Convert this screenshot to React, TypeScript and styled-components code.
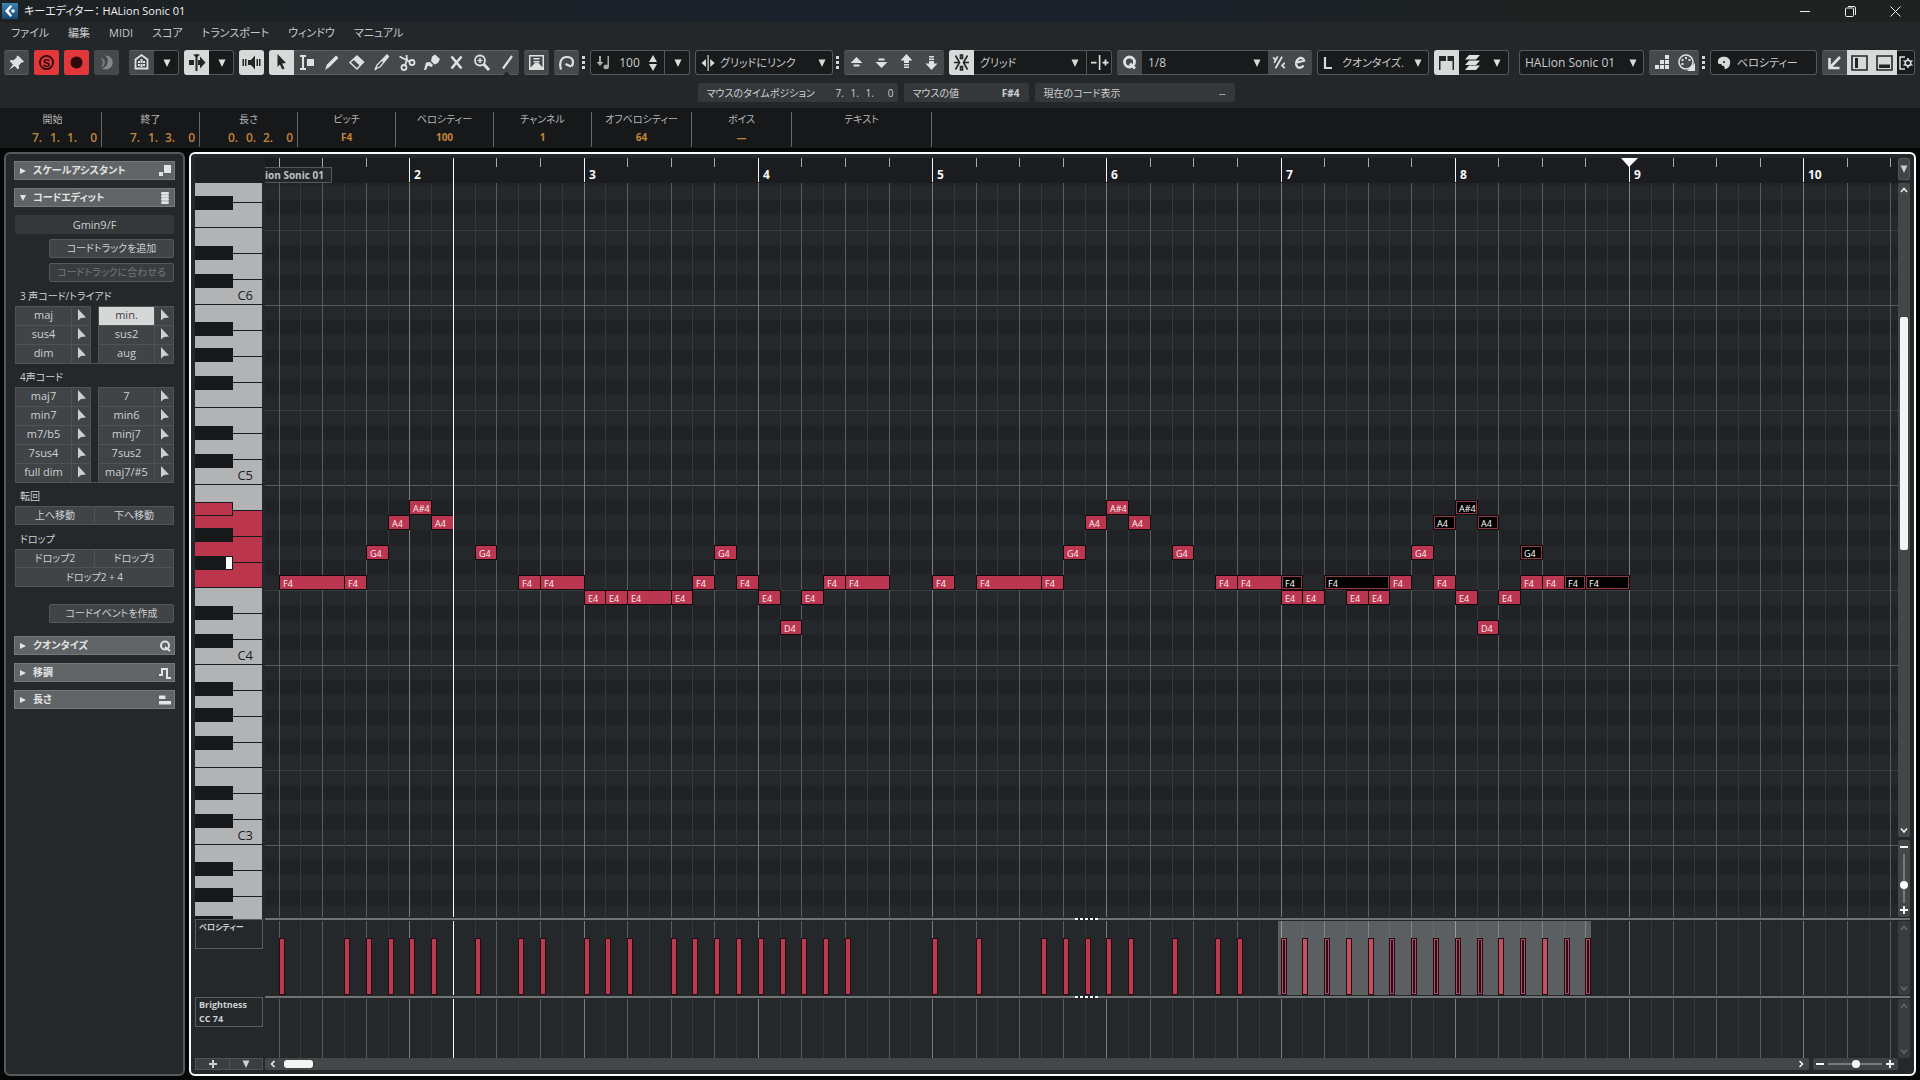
import React from "react";
import styled, { createGlobalStyle, css } from "styled-components";

const GlobalStyle = createGlobalStyle`
  *, *::before, *::after { box-sizing: border-box; }
  html, body { margin: 0; padding: 0; background: #050606; }
  body, button, input, select {
    font-family: "Open Sans", "Noto Sans CJK JP", sans-serif;
    font-size: 11px;
    font-feature-settings: "palt";
    color: #cdd0d1;
  }
  button, input, select { margin: 0; padding: 0; border: 0; background: none; border-radius: 0; }
  button { cursor: pointer; }
`;

/* ---------- timing and pitch geometry ---------- */

const EIGHTH = 21.78;
const ORIGIN = -29.9;
const xAt = (n: number) => Math.round(ORIGIN + EIGHTH * n);

const ROW = 15;
const OCTAVE = 180;
const SCROLL = 58;
const pitchRow: Record<string, number> = { "A#4": 1, A4: 2, G4: 4, F4: 6, E4: 7, D4: 9 };
const yAt = (pitch: string) => 2 * OCTAVE - SCROLL + pitchRow[pitch] * ROW;

type Note = [start: number, length: number, pitch: string, selected?: boolean];
const notes: Note[] = [
  [2, 3, "F4"], [5, 1, "F4"], [6, 1, "G4"], [7, 1, "A4"], [8, 1, "A#4"], [9, 1, "A4"], [11, 1, "G4"],
  [13, 1, "F4"], [14, 2, "F4"], [16, 1, "E4"], [17, 1, "E4"], [18, 2, "E4"], [20, 1, "E4"],
  [21, 1, "F4"], [22, 1, "G4"], [23, 1, "F4"], [24, 1, "E4"], [25, 1, "D4"], [26, 1, "E4"],
  [27, 1, "F4"], [28, 2, "F4"],
  [32, 1, "F4"], [34, 3, "F4"], [37, 1, "F4"], [38, 1, "G4"], [39, 1, "A4"], [40, 1, "A#4"], [41, 1, "A4"],
  [43, 1, "G4"], [45, 1, "F4"], [46, 2, "F4"],
  [48, 1, "E4"], [49, 1, "E4"], [48, 1, "F4", true], [50, 3, "F4", true], [51, 1, "E4"], [52, 1, "E4"],
  [53, 1, "F4"], [54, 1, "G4"], [55, 1, "A4", true], [55, 1, "F4"], [56, 1, "A#4", true], [56, 1, "E4"],
  [57, 1, "A4", true], [57, 1, "D4"], [58, 1, "E4"], [59, 1, "G4", true], [59, 1, "F4"], [60, 1, "F4"],
  [61, 1, "F4", true], [62, 2, "F4", true],
];
const velocityStarts = Array.from(new Set(notes.map((n) => n[0]))).sort((a, b) => a - b);
const hollowBars = new Set([48, 50, 53, 54, 55, 56, 57, 59, 61, 62]);
const gridSteps = Array.from({ length: 75 }, (_, i) => i + 2);

/* ---------- icons ---------- */

const Svg = styled.svg<{ $w?: number; $h?: number }>`
  display: block;
  flex: none;
  width: ${(p) => p.$w ?? 25}px;
  height: ${(p) => p.$h ?? 25}px;
  fill: currentColor;
  pointer-events: none;
`;

type IconProps = { children: React.ReactNode; w?: number; h?: number; box?: string };
const Icon = ({ children, w, h, box }: IconProps) => (
  <Svg $w={w} $h={h} viewBox={box ?? "0 0 25 25"} aria-hidden="true">{children}</Svg>
);
const line = { fill: "none", stroke: "currentColor" } as const;

const Down = () => <Icon w={8} h={8} box="0 0 8 8"><path d="M.5.5h7L4 8z" /></Icon>;
const Pin = () => <Icon><path d="M14 5.500l6 6-1.200 1-1-.300-3 3.300.200 3-1.200.800-3.200-3.200-5.600 4 4-5.600-3.200-3.200.800-1.200 3 .200 3.300-3-.300-1z" /></Icon>;
const Solo = () => <Icon><circle cx="12.500" cy="12.500" r="6.600" {...line} strokeWidth="1.800" /><text x="12.500" y="16.500" textAnchor="middle" fontFamily="Liberation Sans" fontSize="11" fontWeight="700">S</text></Icon>;
const Rec = () => <Icon><circle cx="12.500" cy="12.500" r="6" /></Icon>;
const Moon = () => <Icon><path d="M11 5.500a7 7 0 1 1-3.500 12.500A6 6 0 0 0 13.500 12.500a6 6 0 0 0-2.500-7z" /><path d="M6.500 8a4.500 4.500 0 0 1 0 9c3-2 3-7 0-9z" opacity=".8" /></Icon>;
const House = () => <Icon><path d="M6.500 18.500v-9l6-4.500 6 4.500v9z" {...line} strokeWidth="1.800" /><path d="M9 11h2v2H9zm2.500-2h2v4h-2zM14 11h2v2h-2zm-5 3h2v2H9zm2.500 0h2v3h-2zm2.500 0h2v2h-2z" /></Icon>;
const AutoScroll = () => <Icon><path d="M11.500 4h2v17h-2zM5 10h5v5H5zm9 0h2V6.500l5.500 6-5.500 6V15h-2zM9 4.500h7L12.500 8z" /></Icon>;
const Speaker = () => <Icon><path d="M3.500 9H5v7H3.500zM6 9h1.500v7H6zm3 1h3l4-4.500v14L12 15H9zM17.500 9H19v7h-1.500zM20 9h1.500v7H20z" /></Icon>;
const Cursor = () => <Icon><path d="M8.500 4l8.500 9-3.800.600 2.300 5-2.300 1-2.300-5L8.500 17z" /></Icon>;
const RangeTool = () => <Icon><path d="M6 5h6v2h-2v11h2v2H6v-2h2V7H6zM13 9h7v7h-7z" /></Icon>;
const Pencil = () => <Icon><path d="M17 5.500l2.500 2.500-9 9-4.500 3 2-5.500z" /></Icon>;
const Eraser = () => <Icon><path d="M13 6l6.500 6-6.500 7-7-6.500z" {...line} strokeWidth="1.500" /><path d="M13 6l6.500 6-3.500 3.800-6.500-6z" /></Icon>;
const Knife = () => <Icon><path d="M6 20l2-5L18 5l1.500 1.500-8.500 10.500-3 1z" {...line} strokeWidth="1.300" /><path d="M12.500 11l5.500-6 1.500 1.500-5 6z" /></Icon>;
const Scissors = () => <Icon><g {...line} strokeWidth="1.800"><path d="M5.500 6.500l10 5M12.500 5l.5 5-2 5" /><circle cx="18" cy="12.500" r="2.500" /><circle cx="10" cy="17.500" r="2.500" /></g></Icon>;
const Glue = () => <Icon><path d="M13 6.500l3-2 5 4.500-2 4-3.500 1.500-3.500-3.500zM7 12.500l4-.5 3 3-1.500 2-3.500-1.500L7 20H5z" /></Icon>;
const Cross = () => <Icon><path d="M7.500 6.500l10 12m0-12l-10 12" {...line} strokeWidth="2.600" /></Icon>;
const Zoom = () => <Icon><g {...line}><circle cx="11" cy="10.500" r="5" strokeWidth="1.800" /><path d="M14.500 14l5.500 6" strokeWidth="3" /><path d="M8.500 10.500h5M11 8v5" strokeWidth="1.500" /></g></Icon>;
const LineTool = () => <Icon><path d="M18 6l-9 12.500" {...line} strokeWidth="2.200" /><path d="M9 25l3.500-3.500L16 25z" fill="#24272a" /></Icon>;
const Feedback = () => <Icon><path d="M5 5h4.500v1.500h-3V19H5zM15.500 5H20v14h-1.500V6.500h-3zM9.500 5h7v1.500h-7zm0 3h6v1.500h-6zm0 3h6v1.500h-6zM5 20v-1l6-6h3.500l5.500 6v1z" /></Icon>;
const Loop = () => <Icon><path d="M7 19.500c-2-7 0-12.500 6-12.500s7.500 5 4.500 9.500M11.500 14l5.500 2.500" {...line} strokeWidth="2.200" /></Icon>;
const NoteIn = () => <Icon w={14} h={16} box="0 0 14 16"><path d="M3 1h2v6h2.500L4 11 .500 7H3zM11.500 1h1.500v11a2.800 2.300 0 1 1-1.500-2z" opacity=".75" /></Icon>;
const Spin = () => <Icon w={8} h={16} box="0 0 8 16"><path d="M4 0l4 7H0zM4 16l4-7H0z" /></Icon>;
const GridLink = () => <Icon w={14} h={16} box="0 0 14 16"><path d="M6.500 0h1.200v16H6.500zM5 4v8L.500 8zm4.200 0v8l4.500-4z" /></Icon>;
const UpStep = () => <Icon><path d="M12.500 7l6 6h-12zM9.500 14.500h6v2h-6z" /></Icon>;
const DownStep = () => <Icon><path d="M12.500 18l6-6h-12zM9.500 8.500h6v2h-6z" /></Icon>;
const UpOct = () => <Icon><path d="M12.500 4l6 6.500h-3.500V13h-5v-2.500H6.500zM10 14h5v1.500h-5zm0 2.500h5V18h-5z" /></Icon>;
const DownOct = () => <Icon><path d="M12.500 20l6-6.500h-3.500V11h-5v2.500H6.500zM10 8.500h5V10h-5zM10 6h5v1.500h-5z" /></Icon>;
const Snap = () => <Icon><path d="M11.500 5h2v3.500h-2zm0 11.500h2V20h-2zM6.500 5.500l4 7-4 7M18.500 5.500l-4 7 4 7M5 12.500h5M15 12.500h5" stroke="currentColor" strokeWidth="1.600" fill="none" /></Icon>;
const SnapType = () => <Icon><path d="M11.800 5h1.600v15h-1.600zM4 11.700h5.500v1.800H4zM15.500 11.700h6v1.800h-6zm2.100-2.100h1.800v6h-1.800z" /></Icon>;
const QMark = () => <Icon><circle cx="12.500" cy="12" r="5" {...line} strokeWidth="2.800" /><path d="M13 13.500l5 5" {...line} strokeWidth="2.800" /></Icon>;
const Iter = () => <Icon w={22}><g {...line} strokeWidth="2"><path d="M6 6.500l3 4M11 5.500L7 13M16 6L8.500 19M19 13l-3 3 3 3" /></g></Icon>;
const EMark = () => <Icon w={22}><path d="M6 13L16 10.500c-.5-3.500-4-4-6.500-2s-3.500 6-1.500 8.500 5 1.500 7.500-1" {...line} strokeWidth="2.600" /></Icon>;
const LMark = () => <Icon w={14} h={14} box="0 0 14 14"><path d="M2 1v11h7" {...line} strokeWidth="2.200" /></Icon>;
const Staff = () => <Icon><path d="M5 6h7v5H6.500v9H5zm8.500 0H20v14h-1.500v-9h-5z" /></Icon>;
const Layers = () => <Icon><path d="M10 5h11l-4 4.500H6zM10 10.500h11L17 15H6zM10 15.500h11L17 20H6z" /></Icon>;
const StepIn = () => <Icon><path d="M16 5h4v4h-4zM16 10h4v4h-4zM16 15h4v4h-4zM11 10h4v4h-4zM11 15h4v4h-4zM6 15h4v4H6z" /></Icon>;
const MidiIn = () => <Icon><circle cx="12" cy="12" r="7" {...line} strokeWidth="1.600" /><path d="M11 7h2v2h-2zM7.500 9h2v2h-2zm7 0h2v2h-2zM7.500 13h2v2h-2zM21 13v8h-8z" /></Icon>;
const Palette = () => <Icon w={16} h={18} box="0 0 18 18"><path d="M9 2c4 0 7 2.500 7 6 0 5-3 8-6 8l-1-4-2 .5L6 10H3L2 8c0-4 3-6 7-6zm-1 5h2v2H8z" fillRule="evenodd" /></Icon>;
const CornerArrow = () => <Icon><path d="M7.500 8v10h10M8 17.500L18 7" {...line} strokeWidth="2.600" /></Icon>;
const LeftZone = () => <Icon><path d="M5 6h15v14H5z" {...line} strokeWidth="1.600" /><path d="M8 8h3v10H8z" /></Icon>;
const LowZone = () => <Icon><path d="M5 6h15v14H5z" {...line} strokeWidth="1.600" /><path d="M7 14.500h11V18H7z" /></Icon>;
const Setup = () => <Icon w={16} h={16} box="0 0 16 16"><g {...line} strokeWidth="1.500"><path d="M7 2H2v12h5" /><circle cx="10" cy="8" r="2.800" /><path d="M10 3v2m0 6v2M5.500 5.500l1.500 1m6 3l1.500 1m-9 0l1.500-1m6-3l1.500-1" /></g></Icon>;
const Play = () => <Icon w={8} h={8} box="0 0 8 8"><path d="M1 1L7 4 1 7z" /></Icon>;
const PlayDown = () => <Icon w={8} h={8} box="0 0 8 8"><path d="M1 1h6L4 7z" /></Icon>;
const ApplyArrow = () => <Icon w={9} h={12} box="0 0 9 12"><path d="M1 0v11.500l3-2.500 5-.5z" /></Icon>;
const ScaleIcon = () => <Icon w={12} h={12} box="0 0 12 12"><path d="M5 0h7v8H5zM0 7h4v4H0z" /></Icon>;
const ChordIcon = () => <Icon w={12} h={12} box="0 0 12 12"><rect x="2" y="0" width="8" height="2.700" rx="1.300" /><rect x="2" y="3.100" width="8" height="2.600" rx="1.300" /><rect x="2" y="6.100" width="8" height="2.600" rx="1.300" /><rect x="2" y="9.200" width="8" height="2.700" rx="1.300" /></Icon>;
const QuantIcon = () => <Icon w={12} h={12} box="0 0 12 12"><circle cx="6" cy="5.500" r="4" {...line} strokeWidth="2" /><path d="M6 7l5 4" {...line} strokeWidth="1.800" /></Icon>;
const TransIcon = () => <Icon w={12} h={12} box="0 0 12 12"><path d="M0 8h3V2h5v9h4" {...line} strokeWidth="2" /></Icon>;
const LengthIcon = () => <Icon w={12} h={12} box="0 0 13 12"><path d="M0 1h7v4H0zM0 7h13v4H0z" /></Icon>;
const Chevron = ({ dir }: { dir: "up" | "down" | "left" | "right" }) => {
  const d = { up: "M1 6l3-3.500L7 6", down: "M1 2.500L4 6l3-3.500", left: "M5.500 1L2.500 4l3 3", right: "M2.500 1l3 3-3 3" }[dir];
  return <Icon w={8} h={8} box="0 0 8 8"><path d={d} {...line} strokeWidth="1.500" /></Icon>;
};
const Plus = () => <Icon w={8} h={8} box="0 0 8 8"><path d="M3 0h2v3h3v2H5v3H3V5H0V3h3z" /></Icon>;
const Minus = () => <Icon w={8} h={8} box="0 0 8 8"><path d="M0 3h8v2H0z" /></Icon>;

/* ---------- window frame ---------- */

const Window = styled.div`
  display: flex;
  flex-direction: column;
  min-width: 1600px;
  height: 100vh;
  min-height: 900px;
  overflow: hidden;
  background: #050606;
`;

const TitleBar = styled.header`
  display: flex;
  align-items: center;
  gap: 6px;
  height: 22px;
  padding: 0 2px;
  background: linear-gradient(90deg, #1d2122, #1b222b 40%, #1b222b 60%, #1e2221 80%);
  color: #eef0f0;
`;
const Title = styled.h1`
  flex: 1;
  margin: 0;
  font-size: 11px;
  font-weight: 400;
  line-height: 22px;
`;
const Logo = styled.span`
  display: block;
  background: linear-gradient(#3a86b5, #174a72);
`;
const WindowButtons = styled.div`
  display: flex;
`;
const WindowButton = styled.button`
  display: grid;
  place-items: center;
  width: 45px;
  height: 20px;
  color: #eef0f0;
`;

const MenuBar = styled.nav`
  display: flex;
  align-items: center;
  gap: 19px;
  height: 22px;
  padding: 0 11px;
  background: #24272a;
`;
const MenuItem = styled.button`
  line-height: 20px;
  color: #c5c8ca;
`;

/* ---------- toolbar ---------- */

const Toolbar = styled.div`
  display: flex;
  align-items: center;
  gap: 5px;
  height: 37px;
  padding: 0 5px 0 4px;
  background: #24272a;
`;
const Group = styled.div<{ $grow?: boolean; $wide?: boolean; $w?: number }>`
  display: flex;
  flex: ${(p) => (p.$grow ? "1 1 0" : "none")};
  width: ${(p) => (p.$w ? p.$w + "px" : "auto")};
  min-width: 0;
  height: 25px;
  margin-right: ${(p) => (p.$wide ? 5 : 0)}px;
  border-radius: 3px;
  overflow: hidden;
  background: #181a1c;
  box-shadow: inset 0 0 0 1px #55585b;
`;
type Tone = "plain" | "on" | "red" | "dark" | "dim";
const tones: Record<Tone, ReturnType<typeof css>> = {
  plain: css`background: #46484b; color: #dfe1e1; box-shadow: inset 0 1px #5b5d60, inset 0 -1px #5b5d60;`,
  on: css`background: #d8dada; color: #232527;`,
  red: css`background: #e2383b; color: #2b0b0c;`,
  dark: css`background: transparent; color: #dfe1e1;`,
  dim: css`background: #46484b; color: #85878a;`,
};
const Tool = styled.button<{ $tone?: Tone; $w?: number }>`
  display: flex;
  flex: none;
  align-items: center;
  justify-content: center;
  width: ${(p) => p.$w ?? 25}px;
  height: 25px;
  overflow: hidden;
  ${(p) => tones[p.$tone ?? "plain"]}
`;
const Dots = styled.span`
  flex: none;
  width: 3px;
  height: 13px;
  margin-left: -2px;
  background: repeating-linear-gradient(#d5d7d7 0 3px, transparent 3px 5px);
`;
const Field = styled.label`
  display: flex;
  flex: 1;
  align-items: center;
  gap: 5px;
  min-width: 0;
  height: 25px;
  padding: 0 7px 0 6px;
  color: #d8dada;
`;
const Select = styled.select<{ $latin?: boolean }>`
  flex: 1;
  min-width: 0;
  height: 23px;
  appearance: none;
  outline: 0;
  color: #c9cccd;
  font-size: ${(p) => (p.$latin ? 12 : 11)}px;
  text-overflow: clip;
`;
const NumberInput = styled.input`
  flex: 1;
  min-width: 0;
  width: 30px;
  text-align: center;
  font-size: 12px;
  color: #c9cccd;
  outline: 0;
`;
const Split = styled.span`
  flex: none;
  width: 1px;
  height: 25px;
  background: #55585b;
`;

const Dropdown = ({ label, value, icon, latin }: { label: string; value: string; icon?: React.ReactNode; latin?: boolean }) => (
  <Field>
    {icon}
    <Select $latin={latin} aria-label={label} defaultValue={value}><option>{value}</option></Select>
    <Down />
  </Field>
);

const Status = styled.div`
  display: flex;
  justify-content: center;
  gap: 6px;
  height: 27px;
  padding: 2px 0 6px 12px;
  background: #24272a;
`;
const StatusBox = styled.div<{ $w: number; $tight?: boolean }>`
  display: flex;
  align-items: center;
  justify-content: space-between;
  width: ${(p) => p.$w}px;
  height: 19px;
  padding: 0 ${(p) => (p.$tight ? 4 : 9)}px 0 9px;
  border-radius: 2px;
  background: #35383b;
  font-size: 10px;
`;

const TimeText = styled.span<{ $large?: boolean }>`
  display: grid;
  grid-template-columns: ${(p) => (p.$large ? "18px 17px 17px 13px" : "15px 15px 15px 13px")};
  font-size: ${(p) => (p.$large ? 12 : 10)}px;
  font-weight: ${(p) => (p.$large ? 600 : 400)};
  & > :last-child { text-align: right; }
`;
const Time = ({ parts, large }: { parts: string[]; large?: boolean }) => (
  <TimeText $large={large}>{parts.map((p, i) => <span key={i}>{p}</span>)}</TimeText>
);

/* ---------- info line ---------- */

const InfoLine = styled.dl`
  display: flex;
  height: 40px;
  margin: 0 0 4px;
  padding: 4px 0 1px 4px;
  background: #16181a;
`;
const InfoCell = styled.div<{ $w?: number }>`
  display: flex;
  flex-direction: column;
  align-items: center;
  width: ${(p) => p.$w ?? 98}px;
  border-right: 1px solid #66696b;
`;
const InfoName = styled.dt`
  font-size: 10px;
  line-height: 15px;
  color: #b4b7b8;
`;
const InfoValue = styled.dd<{ $time?: boolean }>`
  align-self: ${(p) => (p.$time ? "flex-end" : "center")};
  margin: 0;
  padding: ${(p) => (p.$time ? "0 4px 0 0" : "0")};
  font-size: 10px;
  font-weight: 700;
  line-height: 21px;
  color: #c4843a;
`;

/* ---------- inspector ---------- */

const Main = styled.main`
  display: flex;
  flex: 1;
  gap: 4px;
  min-height: 0;
  padding: 0 4px 4px;
`;
const Inspector = styled.aside`
  flex: none;
  width: 181px;
  padding: 7px 8px;
  border: 2px solid #58595c;
  border-radius: 6px;
  background: #24282b;
`;
const Section = styled.button`
  display: flex;
  align-items: center;
  gap: 6px;
  width: 100%;
  height: 19px;
  margin-bottom: 8px;
  padding: 0 3px 0 4px;
  border: 1px solid #76797b;
  background: #616466;
  color: #e2e4e4;
  font-size: 10px;
  font-weight: 600;
  line-height: 17px;
  text-align: left;
  & > span { flex: 1; }
`;
const Body = styled.div`
  padding: 0 1px;
  margin-bottom: 13px;
`;
const ChordName = styled.output`
  display: block;
  height: 19px;
  border-radius: 2px;
  background: #35383b;
  line-height: 19px;
  text-align: center;
`;
const Wide = styled.button<{ $top?: number }>`
  display: block;
  width: 125px;
  height: 19px;
  margin: ${(p) => p.$top ?? 5}px 0 0 auto;
  border: 1px solid #55585a;
  border-radius: 2px;
  background: #414447;
  font-size: 10px;
  line-height: 17px;
  &:disabled { color: #747779; background: #393c3f; }
`;
const Caption = styled.h2`
  height: 24px;
  margin: 0;
  padding: 5px 5px 0;
  font-size: 10px;
  font-weight: 400;
  line-height: 18px;
`;
const ChordGrid = styled.div`
  display: grid;
  grid-template-columns: 1fr 1fr;
  column-gap: 7px;
  border-bottom: 1px solid #505356;
  margin-bottom: -1px;
`;
const ChordCell = styled.div`
  display: grid;
  grid-template-columns: 1fr 19px;
  height: 19px;
  border-right: 1px solid #505356;
`;
const ChordButton = styled.button<{ $on?: boolean }>`
  display: grid;
  place-items: center;
  height: 19px;
  padding-bottom: 2px;
  border: solid #505356;
  border-width: 1px 0 0 1px;
  line-height: 16px;
  background: ${(p) => (p.$on ? "#d6d8d7" : "#414447")};
  color: ${(p) => (p.$on ? "#3a3c3e" : "#cdd0d1")};
`;
const PairGrid = styled.div`
  display: grid;
  grid-template-columns: 1fr 1fr;
  border: solid #505356;
  border-width: 1px 0 0 1px;
`;
const PairButton = styled.button<{ $full?: boolean }>`
  grid-column: ${(p) => (p.$full ? "1 / -1" : "auto")};
  height: ${(p) => (p.$full ? 19 : 18)}px;
  border: solid #505356;
  border-width: 0 1px 1px 0;
  background: #414447;
  font-size: 10px;
  line-height: 17px;
`;

const Chords = ({ names, active }: { names: string[]; active?: string }) => (
  <ChordGrid>
    {names.map((n) => (
      <ChordCell key={n}>
        <ChordButton $on={n === active}>{n}</ChordButton>
        <ChordButton aria-label={n}><ApplyArrow /></ChordButton>
      </ChordCell>
    ))}
  </ChordGrid>
);

/* ---------- key editor ---------- */

const Editor = styled.section`
  display: grid;
  flex: 1;
  grid-template-columns: 70px minmax(0, 1fr) 12px;
  grid-template-rows: 25px minmax(0, 1fr) 4px 74px 4px 59px 12px;
  min-width: 0;
  padding: 4px;
  border: 2px solid #fafbfb;
  border-radius: 6px;
  background: #24282b;
`;
const Lane = styled.div`
  position: relative;
  overflow: hidden;
`;
const RulerLane = styled(Lane)`
  background: #1b1c1f;
`;
const RulerCorner = styled.span`
  background: #1e2023;
`;
const RollLane = styled(Lane)`
  background-color: #24282b;
  background-image: linear-gradient(
    #55595b 0 1px, #24282b 1px 15px, #202225 15px 30px, #24282b 30px 45px, #202225 45px 60px,
    #24282b 60px 75px, #202225 75px 90px, #24282b 90px 105px, #3a3e40 105px 106px,
    #24282b 106px 120px, #202225 120px 135px, #24282b 135px 150px, #202225 150px 165px, #24282b 165px 180px
  );
  background-size: 100% 180px;
  background-position: 0 -58px;
`;
const GridLine = styled.i<{ $kind: "bar" | "beat" | "half" }>`
  position: absolute;
  top: 0;
  bottom: 0;
  width: 1px;
  background: ${(p) => ({ bar: "#7a7d7e", beat: "#5a5d5f", half: "#34383a" })[p.$kind]};
`;
const Tick = styled.i<{ $bar: boolean }>`
  position: absolute;
  top: 0;
  width: 1px;
  height: ${(p) => (p.$bar ? 24 : 9)}px;
  background: ${(p) => (p.$bar ? "#f4f5f5" : "#a5a7a8")};
`;
const BarNumber = styled.span`
  position: absolute;
  top: 8px;
  font-size: 12px;
  font-weight: 700;
  line-height: 18px;
  color: #f4f5f5;
`;
const PartLabel = styled.span`
  position: absolute;
  top: 9px;
  left: 0;
  width: 67px;
  height: 16px;
  border: 1px solid #55585a;
  border-left: 0;
  background: #24272a;
  font-size: 10px;
  font-weight: 700;
  line-height: 14px;
  white-space: nowrap;
  color: #bfc2c3;
`;
const Playhead = styled.i`
  position: absolute;
  top: 0;
  bottom: 0;
  width: 1px;
  background: #fff;
`;
const Locator = styled.i`
  position: absolute;
  top: 0;
  margin-left: -8px;
  border: solid transparent;
  border-width: 9px 9px 0 8px;
  border-top-color: #fff;
`;
const NoteBox = styled.button<{ $selected?: boolean }>`
  position: absolute;
  height: 15px;
  padding: 1px 0 0 3px;
  overflow: hidden;
  border: 1px solid #16080b;
  background: ${(p) => (p.$selected ? "#000" : "#bb3650")};
  box-shadow: ${(p) => (p.$selected ? "inset 0 0 0 1px #8e3c48" : "none")};
  color: ${(p) => (p.$selected ? "#fff" : "#fdf0f1")};
  font-size: 9px;
  line-height: 13px;
  text-align: left;
`;
const VelBar = styled.i<{ $hollow: boolean; $shaded: boolean }>`
  position: absolute;
  top: 17px;
  bottom: 0;
  width: 6px;
  border: 1px solid #2a090f;
  background: ${(p) => (p.$hollow ? "#3a0715" : p.$shaded ? "#bb5465" : "#b83b51")};
  box-shadow: ${(p) => (p.$hollow ? "inset 0 0 0 1px #a0566a" : "none")};
`;
const SelectionShade = styled.i`
  position: absolute;
  top: 0;
  bottom: 0;
  background: rgba(220, 225, 222, 0.3);
`;
const Divider = styled.div`
  position: relative;
  grid-column: 2 / 4;
  height: 2px;
  margin-top: 1px;
  background: #707374;
`;
const Grip = styled.i`
  position: absolute;
  top: 0;
  left: 49%;
  width: 23px;
  height: 2px;
  margin-left: 4px;
  background: repeating-linear-gradient(90deg, #f4f5f5 0 3px, #24282b 3px 5px);
`;

/* keyboard */

const Keyboard = styled.div`
  width: 67px;
  margin-bottom: -2px;
  overflow: hidden;
`;
const KeyStack = styled.div`
  margin-top: -58px;
`;
const OctaveBox = styled.div`
  position: relative;
  height: 180px;
`;
const WhiteKey = styled.button<{ $h: number; $lit: boolean }>`
  display: block;
  width: 67px;
  height: ${(p) => p.$h}px;
  padding: 6px 9px 0 0;
  border-bottom: 1px solid #1a1b1c;
  background: ${(p) => (p.$lit ? "#bb364d" : "#b1b3b5")};
  color: #1d1e1f;
  font-size: 13px;
  line-height: 16px;
  text-align: right;
`;
const BlackKey = styled.button<{ $lit: boolean }>`
  position: absolute;
  left: 0;
  width: 38px;
  height: 14px;
  border: ${(p) => (p.$lit ? "1px solid #1a1b1c" : "0")};
  border-left: 0;
  background: ${(p) => (p.$lit ? "#bb364d" : "#17181a")};
`;
const HoverMark = styled.i`
  position: absolute;
  top: 1px;
  right: 1px;
  width: 6px;
  height: 12px;
  background: #fff;
`;

const whites: [string, number][] = [["B", 26], ["A", 26], ["G", 26], ["F", 25], ["E", 26], ["D", 26], ["C", 25]];
const blacks: [string, number][] = [["A#", 17], ["G#", 43], ["F#", 71], ["D#", 121], ["C#", 149]];
const lit = new Set(["A4", "G4", "F4", "A#4"]);

const Piano = () => (
  <Keyboard>
    <KeyStack>
      {[6, 5, 4, 3, 2].map((o) => (
        <OctaveBox key={o}>
          {whites.map(([n, h]) => (
            <WhiteKey key={n} $h={h} $lit={lit.has(n + o)} aria-label={n + o}>{n === "C" && o > 2 ? n + o : ""}</WhiteKey>
          ))}
          {blacks.map(([n, y]) => (
            <BlackKey key={n} $lit={lit.has(n + o)} aria-label={n + o} style={{ top: y }}>
              {n + o === "F#4" && <HoverMark />}
            </BlackKey>
          ))}
        </OctaveBox>
      ))}
    </KeyStack>
  </Keyboard>
);

/* lane names and scrollers */

const LaneName = styled.div`
  display: flex;
  flex-direction: column;
  align-self: start;
  width: 68px;
  height: 30px;
  margin-top: -2px;
  padding: 0 3px;
  border: 1px solid #5a5d5f;
  font-size: 9px;
  font-weight: 700;
  line-height: 14px;
`;
const SmallName = styled.span`
  font-size: 8px;
`;
const VScroll = styled.div<{ $dim?: boolean }>`
  display: flex;
  flex: 1;
  flex-direction: column;
  align-items: center;
  justify-content: space-between;
  min-height: 0;
  padding: 3px 0;
  border-radius: 2px;
  background: ${(p) => (p.$dim ? "#393c3f" : "#444648")};
  color: ${(p) => (p.$dim ? "#66696b" : "#f0f1f1")};
`;
const RightRail = styled.div`
  display: flex;
  flex-direction: column;
  gap: 3px;
  min-height: 0;
`;
const VTrack = styled.div`
  flex: 1;
  width: 8px;
  padding-top: 123px;
`;
const VThumb = styled.div`
  height: 233px;
  border-radius: 2px;
  background: #f3f4f4;
`;
const VZoom = styled.div`
  display: flex;
  flex-direction: column;
  align-items: center;
  gap: 3px;
  padding: 3px 0;
  border-radius: 2px;
  background: #444648;
  color: #f4f5f5;
`;
const Slider = styled.input<{ $vertical?: boolean }>`
  appearance: none;
  outline: 0;
  ${(p) => p.$vertical
    ? css`writing-mode: vertical-lr; width: 8px; height: 49px;
        background: linear-gradient(#77797b, #77797b) center / 2px 100% no-repeat;`
    : css`flex: 1; min-width: 0; height: 8px;
        background: linear-gradient(#77797b, #77797b) center / 100% 2px no-repeat;`}
  &::-webkit-slider-thumb {
    appearance: none;
    width: 8px;
    height: 8px;
    border-radius: 50%;
    background: #fff;
  }
`;
const IconButton = styled.button`
  display: grid;
  flex: none;
  place-items: center;
  color: inherit;
`;
const RulerMenu = styled.button`
  display: grid;
  place-items: center;
  height: 22px;
  border: 1px solid #55585a;
  border-radius: 2px;
  background: #414447;
  color: #c9cbcc;
`;
const LaneButtons = styled.div`
  display: grid;
  grid-template-columns: 1fr 1fr;
  width: 68px;
  height: 12px;
  border: 1px solid #505356;
  background: #3b3e41;
  & > button + button { border-left: 1px solid #505356; }
`;
const BottomBar = styled.div`
  display: flex;
  gap: 4px;
  height: 12px;
  color: #f4f5f5;
`;
const HScroll = styled.div`
  display: flex;
  flex: 1;
  align-items: center;
  justify-content: space-between;
  padding: 0 4px;
  border-radius: 2px;
  background: #444648;
`;
const HTrack = styled.div`
  flex: 1;
  padding-left: 7px;
`;
const HThumb = styled.div`
  width: 29px;
  height: 8px;
  border-radius: 3px;
  background: #f3f4f4;
`;
const HZoom = styled.div`
  display: flex;
  align-items: center;
  gap: 4px;
  width: 85px;
  padding: 0 4px 0 3px;
  border-radius: 2px;
  background: #3f4244;
`;

const GridLines = () => (
  <>
    {gridSteps.map((n) => (
      <GridLine key={n} $kind={n % 8 === 0 ? "bar" : n % 2 === 0 ? "beat" : "half"} style={{ left: xAt(n) }} />
    ))}
  </>
);
const Cursorline = () => <Playhead style={{ left: xAt(10) }} />;

const DimScroll = () => (
  <VScroll $dim>
    <IconButton aria-label="up"><Chevron dir="up" /></IconButton>
    <IconButton aria-label="down"><Chevron dir="down" /></IconButton>
  </VScroll>
);

const menus = ["ファイル", "編集", "MIDI", "スコア", "トランスポート", "ウィンドウ", "マニュアル"];

const info: { name: string; value?: string; time?: string[]; w?: number }[] = [
  { name: "開始", time: ["7.", "1.", "1.", "0"] },
  { name: "終了", time: ["7.", "1.", "3.", "0"] },
  { name: "長さ", time: ["0.", "0.", "2.", "0"] },
  { name: "ピッチ", value: "F4" },
  { name: "ベロシティー", value: "100" },
  { name: "チャンネル", value: "1" },
  { name: "オフベロシティー", value: "64", w: 100 },
  { name: "ボイス", value: "—", w: 100 },
  { name: "テキスト", value: "", w: 140 },
];

const editTools: [string, () => React.ReactElement][] = [
  ["選択", Cursor], ["範囲", RangeTool], ["鉛筆", Pencil], ["消しゴム", Eraser], ["トリム", Knife],
  ["はさみ", Scissors], ["のり", Glue], ["ミュート", Cross], ["ズーム", Zoom], ["ライン", LineTool],
];

export default function App() {
  return (
    <Window>
      <GlobalStyle />
      <TitleBar>
        <Logo>
          <Icon w={16} h={16} box="0 0 16 16"><path d="M8.500 2L3 8l5.500 6 1.500-1.500L6.500 8 10 3.500z" fill="#fff" /><circle cx="11" cy="8" r="1.800" fill="#fff" /></Icon>
        </Logo>
        <Title>キーエディター： HALion Sonic 01</Title>
        <WindowButtons>
          <WindowButton aria-label="最小化"><Icon w={11} h={11} box="0 0 11 11"><path d="M0 5.500h10" {...line} /></Icon></WindowButton>
          <WindowButton aria-label="元に戻す"><Icon w={11} h={11} box="0 0 11 11"><path d="M.5 3a1 1 0 0 1 1-1h6a1 1 0 0 1 1 1v6.500a1 1 0 0 1-1 1h-6a1 1 0 0 1-1-1zM3 .5h6a1.500 1.500 0 0 1 1.500 1.500v7" {...line} /></Icon></WindowButton>
          <WindowButton aria-label="閉じる"><Icon w={11} h={11} box="0 0 11 11"><path d="M.5.5l10 10m0-10l-10 10" {...line} /></Icon></WindowButton>
        </WindowButtons>
      </TitleBar>
      <MenuBar>{menus.map((m) => <MenuItem key={m}>{m}</MenuItem>)}</MenuBar>

      <Toolbar>
        <Group><Tool aria-label="固定"><Pin /></Tool></Group>
        <Group><Tool $tone="red" aria-label="ソロ"><Solo /></Tool></Group>
        <Group><Tool $tone="red" aria-label="録音"><Rec /></Tool></Group>
        <Group $wide><Tool $tone="dim" aria-label="レトロスペクティブ"><Moon /></Tool></Group>
        <Group><Tool aria-label="表示"><House /></Tool><Tool $tone="dark" aria-label="表示メニュー"><Down /></Tool></Group>
        <Group><Tool $tone="on" aria-label="自動スクロール"><AutoScroll /></Tool><Tool $tone="dark" aria-label="スクロールメニュー"><Down /></Tool></Group>
        <Group><Tool $tone="on" aria-label="試聴"><Speaker /></Tool></Group>
        <Group>
          {editTools.map(([name, Glyph], i) => (
            <Tool key={name} $tone={i === 0 ? "on" : "plain"} aria-label={name}><Glyph /></Tool>
          ))}
        </Group>
        <Group><Tool aria-label="フィードバック"><Feedback /></Tool></Group>
        <Group><Tool aria-label="ループ"><Loop /></Tool></Group>
        <Dots />
        <Group $w={100}>
          <Field><NoteIn /><NumberInput aria-label="ベロシティー" defaultValue="100" /><Spin /></Field>
          <Split />
          <Tool $tone="dark" aria-label="ベロシティーメニュー"><Down /></Tool>
        </Group>
        <Group $w={138}><Dropdown label="ナッジ" value="グリッドにリンク" icon={<GridLink />} /></Group>
        <Dots />
        <Group>
          <Tool aria-label="半音上"><UpStep /></Tool>
          <Tool aria-label="半音下"><DownStep /></Tool>
          <Tool aria-label="オクターブ上"><UpOct /></Tool>
          <Tool aria-label="オクターブ下"><DownOct /></Tool>
        </Group>
        <Group $w={163}>
          <Tool $tone="on" aria-label="スナップ"><Snap /></Tool>
          <Dropdown label="スナップタイプ" value="グリッド" />
          <Split />
          <Tool $tone="dark" aria-label="相対"><SnapType /></Tool>
        </Group>
        <Group $grow>
          <Tool aria-label="クオンタイズ適用"><QMark /></Tool>
          <Dropdown latin label="クオンタイズ値" value="1/8" />
          <Tool $w={22} aria-label="ソフト"><Iter /></Tool>
          <Tool $w={22} aria-label="設定"><EMark /></Tool>
        </Group>
        <Group $w={112}><Dropdown label="長さ" value="クオンタイズ." icon={<LMark />} /></Group>
        <Group $wide>
          <Tool $tone="on" aria-label="パート境界"><Staff /></Tool>
          <Tool $tone="dark" aria-label="レイヤー"><Layers /></Tool>
          <Tool $tone="dark" aria-label="レイヤーメニュー"><Down /></Tool>
        </Group>
        <Group $w={125}><Dropdown latin label="パート" value="HALion Sonic 01" /></Group>
        <Group>
          <Tool aria-label="ステップ入力"><StepIn /></Tool>
          <Tool aria-label="MIDI入力"><MidiIn /></Tool>
        </Group>
        <Dots />
        <Group $w={107}><Field><Palette /><Select aria-label="カラー" defaultValue="ベロシティー"><option>ベロシティー</option></Select></Field></Group>
        <Group>
          <Tool aria-label="別ウィンドウ"><CornerArrow /></Tool>
          <Tool $tone="on" aria-label="左ゾーン"><LeftZone /></Tool>
          <Tool $tone="on" aria-label="下ゾーン"><LowZone /></Tool>
          <Tool $tone="dark" $w={18} aria-label="設定"><Setup /></Tool>
        </Group>
      </Toolbar>

      <Status>
        <StatusBox $w={200} $tight><span>マウスのタイムポジション</span><Time parts={["7.", "1.", "1.", "0"]} /></StatusBox>
        <StatusBox $w={125}><span>マウスの値</span><b>F#4</b></StatusBox>
        <StatusBox $w={200}><span>現在のコード表示</span><span>--</span></StatusBox>
      </Status>

      <InfoLine>
        {info.map((c) => (
          <InfoCell key={c.name} $w={c.w}>
            <InfoName>{c.name}</InfoName>
            <InfoValue $time={!!c.time}>{c.time ? <Time large parts={c.time} /> : c.value}</InfoValue>
          </InfoCell>
        ))}
      </InfoLine>

      <Main>
        <Inspector>
          <Section><Play /><span>スケールアシスタント</span><ScaleIcon /></Section>
          <Section><PlayDown /><span>コードエディット</span><ChordIcon /></Section>
          <Body>
            <ChordName>Gmin9/F</ChordName>
            <Wide>コードトラックを追加</Wide>
            <Wide disabled>コードトラックに合わせる</Wide>
            <Caption>3 声コード/トライアド</Caption>
            <Chords names={["maj", "min.", "sus4", "sus2", "dim", "aug"]} active="min." />
            <Caption>4声コード</Caption>
            <Chords names={["maj7", "7", "min7", "min6", "m7/b5", "minj7", "7sus4", "7sus2", "full dim", "maj7/#5"]} />
            <Caption>転回</Caption>
            <PairGrid><PairButton>上へ移動</PairButton><PairButton>下へ移動</PairButton></PairGrid>
            <Caption>ドロップ</Caption>
            <PairGrid><PairButton>ドロップ2</PairButton><PairButton>ドロップ3</PairButton><PairButton $full>ドロップ2 + 4</PairButton></PairGrid>
            <Wide $top={17}>コードイベントを作成</Wide>
          </Body>
          <Section><Play /><span>クオンタイズ</span><QuantIcon /></Section>
          <Section><Play /><span>移調</span><TransIcon /></Section>
          <Section><Play /><span>長さ</span><LengthIcon /></Section>
        </Inspector>

        <Editor>
          <RulerCorner />
          <RulerLane>
            <PartLabel>ion Sonic 01</PartLabel>
            {gridSteps.filter((n) => n % 2 === 0).map((n) => (
              <Tick key={n} $bar={n % 8 === 0} style={{ left: xAt(n) }} />
            ))}
            {[2, 3, 4, 5, 6, 7, 8, 9, 10].map((b) => (
              <BarNumber key={b} style={{ left: xAt((b - 1) * 8) + 5 }}>{b}</BarNumber>
            ))}
            <Cursorline />
            <Locator style={{ left: xAt(64) }} />
          </RulerLane>
          <RulerMenu aria-label="ルーラー"><Down /></RulerMenu>

          <Piano />
          <RollLane>
            <GridLines />
            {notes.map(([start, len, pitch, selected]) => (
              <NoteBox
                key={start + pitch}
                $selected={selected}
                style={{ left: xAt(start), top: yAt(pitch), width: xAt(start + len) - xAt(start) + 1 }}
              >
                {pitch}
              </NoteBox>
            ))}
            <Cursorline />
          </RollLane>
          <RightRail>
            <VScroll>
              <IconButton aria-label="up"><Chevron dir="up" /></IconButton>
              <VTrack><VThumb /></VTrack>
              <IconButton aria-label="down"><Chevron dir="down" /></IconButton>
            </VScroll>
            <VZoom>
              <IconButton aria-label="縮小"><Minus /></IconButton>
              <Slider $vertical type="range" aria-label="縦ズーム" defaultValue={66} />
              <IconButton aria-label="拡大"><Plus /></IconButton>
            </VZoom>
          </RightRail>

          <span />
          <Divider><Grip /></Divider>

          <LaneName><SmallName>ベロシティー</SmallName></LaneName>
          <Lane>
            <GridLines />
            <SelectionShade style={{ left: xAt(48) - 3, width: xAt(62) - xAt(48) + 9 }} />
            {velocityStarts.map((n) => (
              <VelBar key={n} $hollow={hollowBars.has(n)} $shaded={n >= 48} style={{ left: xAt(n) }} />
            ))}
            <Cursorline />
          </Lane>
          <DimScroll />

          <span />
          <Divider><Grip /></Divider>

          <LaneName><span>Brightness</span><span>CC 74</span></LaneName>
          <Lane>
            <GridLines />
            <Cursorline />
          </Lane>
          <DimScroll />

          <LaneButtons>
            <IconButton aria-label="レーン追加"><Plus /></IconButton>
            <IconButton aria-label="レーンメニュー"><Down /></IconButton>
          </LaneButtons>
          <BottomBar>
            <HScroll>
              <IconButton aria-label="left"><Chevron dir="left" /></IconButton>
              <HTrack><HThumb /></HTrack>
              <IconButton aria-label="right"><Chevron dir="right" /></IconButton>
            </HScroll>
            <HZoom>
              <IconButton aria-label="縮小"><Minus /></IconButton>
              <Slider type="range" aria-label="横ズーム" defaultValue={52} />
              <IconButton aria-label="拡大"><Plus /></IconButton>
            </HZoom>
          </BottomBar>
        </Editor>
      </Main>
    </Window>
  );
}
